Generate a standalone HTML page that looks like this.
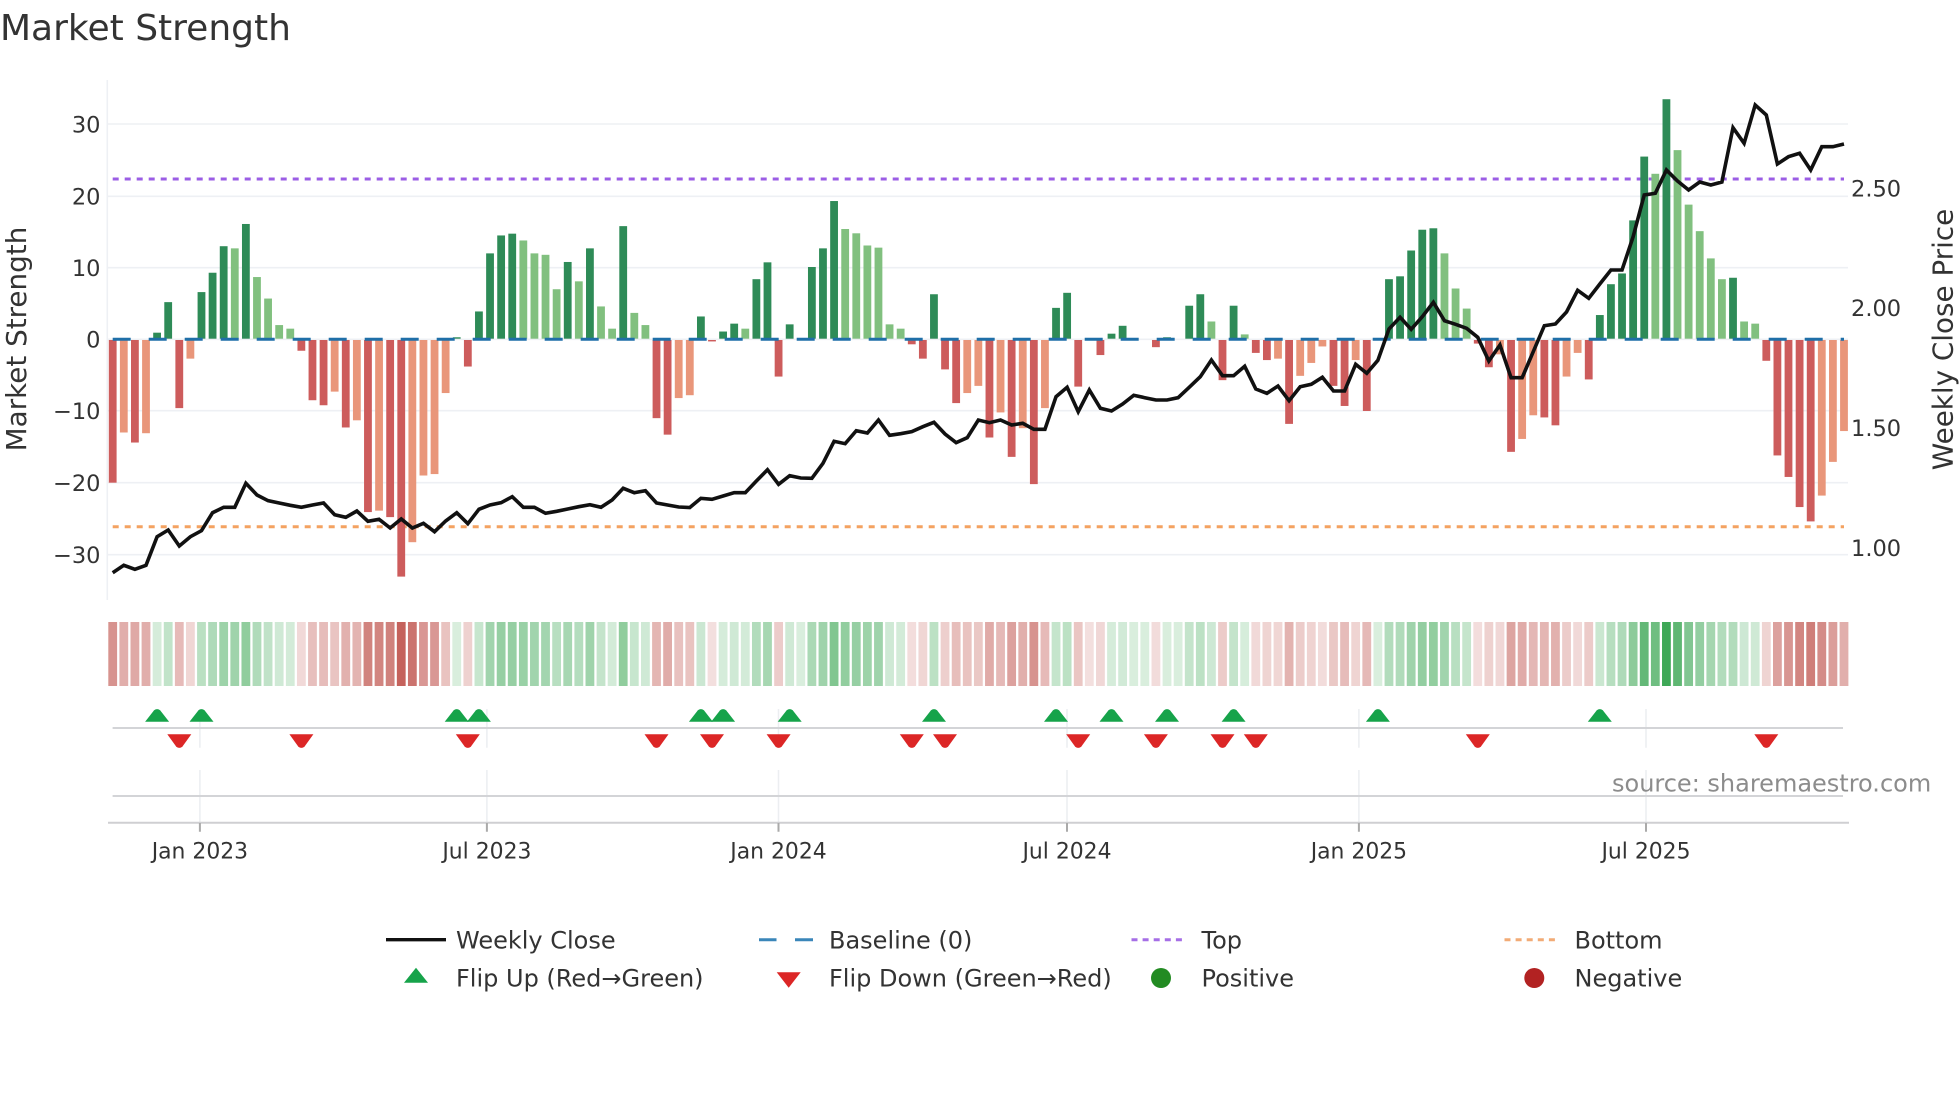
<!DOCTYPE html>
<html><head><meta charset="utf-8"><title>Market Strength</title>
<style>
html,body{margin:0;padding:0;background:#fff}
svg{display:block}
text{font-family:"DejaVu Sans","Liberation Sans",sans-serif;fill:#333}
.b rect{width:.703px}
.st rect{width:.793px;height:1px}
.t{font-size:22.5px}
.x{font-size:21.9px;text-anchor:middle}
.l{font-size:24px}
</style></head><body>
<svg width="1960" height="1102" viewBox="0 0 1960 1102" xmlns="http://www.w3.org/2000/svg">
<defs>
<path id="up" d="M-12 12.7L-3 1.2Q0-1 3 1.2L12 12.7Z" fill="#16a34a"/>
<path id="dn" d="M-12 0H12L3 12.4Q0 14.8-3 12.4Z" fill="#dc2626"/>
</defs>
<rect width="1960" height="1102" fill="#fff"/>
<text x="0" y="40" style="font-size:36px">Market Strength</text>

<!-- grid -->
<g stroke="#eef0f4" stroke-width="1.6" fill="none">
<path d="M107.3 80V600"/>
<path d="M107 124H1848M107 196.3H1848M107 267.7H1848M107 339.3H1848M107 410.7H1848M107 482.7H1848M107 554.7H1848"/>
</g>
<!-- thresholds -->
<path d="M112.7 179H1844" stroke="#9b5de5" stroke-width="3" stroke-dasharray="6 6" fill="none"/>
<path d="M112.7 526.7H1844" stroke="#f4a261" stroke-width="3" stroke-dasharray="6 6" fill="none"/>

<!-- positive bars -->
<g class="b" transform="translate(108.8,338.7) scale(11.098,-7.17)">
<g fill="#2e8b57">
<rect x="4" height=".84"/><rect x="5" height="5.1"/><rect x="8" height="6.5"/><rect x="9" height="9.2"/><rect x="10" height="12.9"/><rect x="12" height="16"/><rect x="31" height=".2"/><rect x="33" height="3.8"/><rect x="34" height="11.9"/><rect x="35" height="14.4"/><rect x="36" height="14.65"/><rect x="41" height="10.7"/><rect x="43" height="12.6"/><rect x="46" height="15.7"/><rect x="53" height="3.1"/><rect x="55" height="1"/><rect x="56" height="2.1"/><rect x="58" height="8.3"/><rect x="59" height="10.65"/><rect x="61" height="2"/><rect x="63" height="10"/><rect x="64" height="12.6"/><rect x="65" height="19.2"/><rect x="74" height="6.2"/><rect x="85" height="4.3"/><rect x="86" height="6.4"/><rect x="90" height=".7"/><rect x="91" height="1.8"/><rect x="95" height=".2"/><rect x="97" height="4.6"/><rect x="98" height="6.2"/><rect x="101" height="4.6"/><rect x="115" height="8.3"/><rect x="116" height="8.7"/><rect x="117" height="12.3"/><rect x="118" height="15.2"/><rect x="119" height="15.4"/><rect x="134" height="3.3"/><rect x="135" height="7.6"/><rect x="136" height="9.1"/><rect x="137" height="16.5"/><rect x="138" height="25.4"/><rect x="140" height="33.4"/><rect x="146" height="8.5"/>
</g>
<g fill="#81c07f">
<rect x="11" height="12.6"/><rect x="13" height="8.6"/><rect x="14" height="5.6"/><rect x="15" height="1.9"/><rect x="16" height="1.4"/><rect x="37" height="13.7"/><rect x="38" height="11.9"/><rect x="39" height="11.7"/><rect x="40" height="6.9"/><rect x="42" height="8"/><rect x="44" height="4.5"/><rect x="45" height="1.4"/><rect x="47" height="3.6"/><rect x="48" height="1.9"/><rect x="57" height="1.4"/><rect x="66" height="15.3"/><rect x="67" height="14.7"/><rect x="68" height="13"/><rect x="69" height="12.7"/><rect x="70" height="2"/><rect x="71" height="1.4"/><rect x="99" height="2.4"/><rect x="102" height=".6"/><rect x="120" height="11.9"/><rect x="121" height="7"/><rect x="122" height="4.2"/><rect x="139" height="23"/><rect x="141" height="26.3"/><rect x="142" height="18.7"/><rect x="143" height="15"/><rect x="144" height="11.2"/><rect x="145" height="8.3"/><rect x="147" height="2.4"/><rect x="148" height="2.1"/>
</g>
</g>
<!-- negative bars -->
<g class="b" transform="translate(108.8,340) scale(11.098,7.17)">
<g fill="#cd5c5c">
<rect x="0" height="19.9"/><rect x="2" height="14.3"/><rect x="6" height="9.5"/><rect x="17" height="1.5"/><rect x="18" height="8.4"/><rect x="19" height="9.1"/><rect x="21" height="12.2"/><rect x="23" height="24"/><rect x="25" height="24.7"/><rect x="26" height="33"/><rect x="32" height="3.7"/><rect x="49" height="10.9"/><rect x="50" height="13.2"/><rect x="54" height=".2"/><rect x="60" height="5.1"/><rect x="72" height=".6"/><rect x="73" height="2.6"/><rect x="75" height="4.1"/><rect x="76" height="8.8"/><rect x="79" height="13.6"/><rect x="81" height="16.3"/><rect x="83" height="20.1"/><rect x="87" height="6.5"/><rect x="89" height="2.1"/><rect x="94" height="1"/><rect x="100" height="5.6"/><rect x="103" height="1.8"/><rect x="104" height="2.8"/><rect x="106" height="11.7"/><rect x="110" height="6.4"/><rect x="111" height="9.2"/><rect x="113" height="9.9"/><rect x="123" height=".5"/><rect x="124" height="3.8"/><rect x="126" height="15.6"/><rect x="129" height="10.8"/><rect x="130" height="11.9"/><rect x="133" height="5.5"/><rect x="149" height="2.9"/><rect x="150" height="16.1"/><rect x="151" height="19.1"/><rect x="152" height="23.3"/><rect x="153" height="25.3"/>
</g>
<g fill="#e9967a">
<rect x="1" height="12.9"/><rect x="3" height="13"/><rect x="7" height="2.6"/><rect x="20" height="7.2"/><rect x="22" height="11.2"/><rect x="24" height="23.8"/><rect x="27" height="28.2"/><rect x="28" height="18.9"/><rect x="29" height="18.7"/><rect x="30" height="7.4"/><rect x="51" height="8.1"/><rect x="52" height="7.7"/><rect x="77" height="7.4"/><rect x="78" height="6.4"/><rect x="80" height="10.1"/><rect x="82" height="12.3"/><rect x="84" height="9.5"/><rect x="105" height="2.6"/><rect x="107" height="5"/><rect x="108" height="3.2"/><rect x="109" height=".9"/><rect x="112" height="2.8"/><rect x="125" height="2"/><rect x="127" height="13.8"/><rect x="128" height="10.5"/><rect x="131" height="5.1"/><rect x="132" height="1.8"/><rect x="154" height="21.7"/><rect x="155" height="17"/><rect x="156" height="12.7"/>
</g>
</g>
<!-- baseline -->
<path d="M112.7 339.3H1844" stroke="#1f6fa8" stroke-width="3" stroke-dasharray="18 18" fill="none"/>
<!-- weekly close -->
<g transform="translate(112.7,0) scale(11.098,1)">
<polyline vector-effect="non-scaling-stroke" fill="none" stroke="#111" stroke-width="3.6" stroke-linejoin="miter" points="0,572.7 1,565.3 2,569.3 3,565.3 4,536.7 5,530 6,546 7,536.7 8,530.7 9,512.7 10,507.3 11,507.3 12,483.3 13,495 14,500.7 15,503 16,505.3 17,507.3 18,505 19,503 20,514.7 21,517.3 22,511 23,521.3 24,519.3 25,528 26,519 27,528 28,523.3 29,531.7 30,521 31,512.7 32,523.7 33,509.3 34,505 35,502.7 36,496.7 37,507.3 38,507.3 39,513.3 40,511.3 41,509 42,506.7 43,504.7 44,507.3 45,500 46,488.3 47,492.7 48,490.7 49,503 50,505 51,507 52,507.5 53,498.3 54,499.3 55,496 56,492.7 57,492.7 58,481 59,469.7 60,484.3 61,475.7 62,478 63,478.3 64,463.3 65,441.3 66,443.7 67,430.7 68,433 69,420 70,435.3 71,433.7 72,431.7 73,426.7 74,422.3 75,434 76,442.7 77,437.7 78,420 79,422.7 80,420 81,425 82,423.3 83,429.3 84,429.3 85,396.7 86,387.3 87,411.7 88,390 89,408.3 90,411 91,404 92,395.3 93,397.7 94,400 95,400 96,397.7 97,387.3 98,376.7 99,360 100,375.7 101,375.7 102,366.3 103,389 104,393.3 105,386 106,400.7 107,386.7 108,384.3 109,377.3 110,391 111,391 112,364.3 113,373.3 114,360.3 115,329 116,317.3 117,329.3 118,316.7 119,302.3 120,320.7 121,324.3 122,328.3 123,337.3 124,361 125,345 126,377.7 127,377.7 128,351.7 129,325.7 130,324 131,312 132,290.3 133,298.3 134,284 135,270 136,270 137,236.7 138,195 139,193.3 140,170 141,181 142,190 143,182 144,185 145,182 146,127.7 147,143.3 148,105 149,115 150,164 151,156.7 152,153.3 153,170 154,146.7 155,146.7 156,144"/>
</g>

<!-- left ticks -->
<g class="t" text-anchor="end">
<text x="100.5" y="132.7">30</text><text x="100.5" y="204.6">20</text><text x="100.5" y="276">10</text><text x="100.5" y="347.6">0</text><text x="100.5" y="419">−10</text><text x="100.5" y="491">−20</text><text x="100.5" y="563">−30</text>
</g>
<!-- right ticks -->
<g class="t">
<text x="1851" y="196.3">2.50</text><text x="1851" y="316.2">2.00</text><text x="1851" y="436">1.50</text><text x="1851" y="556">1.00</text>
</g>
<text transform="translate(26,339) rotate(-90)" text-anchor="middle" style="font-size:27.8px">Market Strength</text>
<text transform="translate(1952.5,339.5) rotate(-90)" text-anchor="middle" style="font-size:27.8px">Weekly Close Price</text>

<!-- heat strip -->
<g class="st" transform="translate(108.3,622) scale(11.098,64)">
<g fill="#c4605a">
<rect x="0" opacity=".68"/><rect x="1" opacity=".51"/><rect x="2" opacity=".54"/><rect x="3" opacity=".51"/><rect x="6" opacity=".43"/><rect x="7" opacity=".26"/><rect x="17" opacity=".24"/><rect x="18" opacity=".4"/><rect x="19" opacity=".42"/><rect x="20" opacity=".37"/><rect x="21" opacity=".49"/><rect x="22" opacity=".47"/><rect x="23" opacity=".78"/><rect x="24" opacity=".77"/><rect x="25" opacity=".79"/><rect x="26" opacity=".99"/><rect x="27" opacity=".88"/><rect x="28" opacity=".65"/><rect x="29" opacity=".65"/><rect x="30" opacity=".38"/><rect x="32" opacity=".29"/><rect x="49" opacity=".46"/><rect x="50" opacity=".52"/><rect x="51" opacity=".39"/><rect x="52" opacity=".38"/><rect x="54" opacity=".2"/><rect x="60" opacity=".32"/><rect x="72" opacity=".21"/><rect x="73" opacity=".26"/><rect x="75" opacity=".3"/><rect x="76" opacity=".41"/><rect x="77" opacity=".38"/><rect x="78" opacity=".35"/><rect x="79" opacity=".53"/><rect x="80" opacity=".44"/><rect x="81" opacity=".59"/><rect x="82" opacity=".5"/><rect x="83" opacity=".68"/><rect x="84" opacity=".43"/><rect x="87" opacity=".36"/><rect x="88" opacity=".2"/><rect x="89" opacity=".25"/><rect x="94" opacity=".22"/><rect x="100" opacity=".33"/><rect x="103" opacity=".24"/><rect x="104" opacity=".27"/><rect x="105" opacity=".26"/><rect x="106" opacity=".48"/><rect x="107" opacity=".32"/><rect x="108" opacity=".28"/><rect x="109" opacity=".22"/><rect x="110" opacity=".35"/><rect x="111" opacity=".42"/><rect x="112" opacity=".27"/><rect x="113" opacity=".44"/><rect x="123" opacity=".21"/><rect x="124" opacity=".29"/><rect x="125" opacity=".25"/><rect x="126" opacity=".57"/><rect x="127" opacity=".53"/><rect x="128" opacity=".45"/><rect x="129" opacity=".46"/><rect x="130" opacity=".49"/><rect x="131" opacity=".32"/><rect x="132" opacity=".24"/><rect x="133" opacity=".33"/><rect x="149" opacity=".27"/><rect x="150" opacity=".59"/><rect x="151" opacity=".66"/><rect x="152" opacity=".76"/><rect x="153" opacity=".81"/><rect x="154" opacity=".72"/><rect x="155" opacity=".61"/><rect x="156" opacity=".5"/>
</g>
<g fill="#3fa857">
<rect x="4" opacity=".22"/><rect x="5" opacity=".32"/><rect x="8" opacity=".36"/><rect x="9" opacity=".42"/><rect x="10" opacity=".51"/><rect x="11" opacity=".5"/><rect x="12" opacity=".58"/><rect x="13" opacity=".41"/><rect x="14" opacity=".33"/><rect x="15" opacity=".25"/><rect x="16" opacity=".23"/><rect x="31" opacity=".2"/><rect x="33" opacity=".29"/><rect x="34" opacity=".49"/><rect x="35" opacity=".55"/><rect x="36" opacity=".55"/><rect x="37" opacity=".53"/><rect x="38" opacity=".49"/><rect x="39" opacity=".48"/><rect x="40" opacity=".37"/><rect x="41" opacity=".46"/><rect x="42" opacity=".39"/><rect x="43" opacity=".5"/><rect x="44" opacity=".31"/><rect x="45" opacity=".23"/><rect x="46" opacity=".58"/><rect x="47" opacity=".29"/><rect x="48" opacity=".25"/><rect x="53" opacity=".27"/><rect x="55" opacity=".22"/><rect x="56" opacity=".25"/><rect x="57" opacity=".23"/><rect x="58" opacity=".4"/><rect x="59" opacity=".46"/><rect x="61" opacity=".25"/><rect x="62" opacity=".2"/><rect x="63" opacity=".44"/><rect x="64" opacity=".5"/><rect x="65" opacity=".66"/><rect x="66" opacity=".57"/><rect x="67" opacity=".55"/><rect x="68" opacity=".51"/><rect x="69" opacity=".5"/><rect x="70" opacity=".25"/><rect x="71" opacity=".23"/><rect x="74" opacity=".35"/><rect x="85" opacity=".3"/><rect x="86" opacity=".35"/><rect x="90" opacity=".22"/><rect x="91" opacity=".24"/><rect x="92" opacity=".2"/><rect x="93" opacity=".2"/><rect x="95" opacity=".2"/><rect x="96" opacity=".2"/><rect x="97" opacity=".31"/><rect x="98" opacity=".35"/><rect x="99" opacity=".26"/><rect x="101" opacity=".31"/><rect x="102" opacity=".21"/><rect x="114" opacity=".2"/><rect x="115" opacity=".4"/><rect x="116" opacity=".41"/><rect x="117" opacity=".5"/><rect x="118" opacity=".56"/><rect x="119" opacity=".57"/><rect x="120" opacity=".49"/><rect x="121" opacity=".37"/><rect x="122" opacity=".3"/><rect x="134" opacity=".28"/><rect x="135" opacity=".38"/><rect x="136" opacity=".42"/><rect x="137" opacity=".6"/><rect x="138" opacity=".81"/><rect x="139" opacity=".75"/><rect x="140" opacity="1"/><rect x="141" opacity=".83"/><rect x="142" opacity=".65"/><rect x="143" opacity=".56"/><rect x="144" opacity=".47"/><rect x="145" opacity=".4"/><rect x="146" opacity=".4"/><rect x="147" opacity=".26"/><rect x="148" opacity=".25"/>
</g>
</g>

<!-- lower panels -->
<path d="M199.9 709V747.7M486.9 709V747.7M778.5 709V747.7M1067 709V747.7M1358.9 709V747.7M1646 709V747.7M199.9 770V822.7M486.9 770V822.7M778.5 770V822.7M1067 770V822.7M1358.9 770V822.7M1646 770V822.7" stroke="#eceef1" stroke-width="1.5" fill="none"/>
<path d="M112.6 728H1843M112.6 796H1843" stroke="#d3d4d7" stroke-width="2" fill="none"/>
<path d="M108 822.7H1849" stroke="#cfcfd2" stroke-width="2" fill="none"/>
<path d="M199.9 823V831.7M486.9 823V831.7M778.5 823V831.7M1067 823V831.7M1358.9 823V831.7M1646 823V831.7" stroke="#aaa" stroke-width="2" fill="none"/>

<g transform="translate(0,709)">
<use href="#up" x="157.1"/><use href="#up" x="201.5"/><use href="#up" x="456.7"/><use href="#up" x="478.9"/><use href="#up" x="700.9"/><use href="#up" x="723.1"/><use href="#up" x="789.7"/><use href="#up" x="934"/><use href="#up" x="1056"/><use href="#up" x="1111.5"/><use href="#up" x="1167"/><use href="#up" x="1233.6"/><use href="#up" x="1377.9"/><use href="#up" x="1599.8"/>
</g>
<g transform="translate(0,734.3)">
<use href="#dn" x="179.3"/><use href="#dn" x="301.4"/><use href="#dn" x="467.8"/><use href="#dn" x="656.5"/><use href="#dn" x="712"/><use href="#dn" x="778.6"/><use href="#dn" x="911.8"/><use href="#dn" x="945"/><use href="#dn" x="1078.2"/><use href="#dn" x="1155.9"/><use href="#dn" x="1222.5"/><use href="#dn" x="1255.8"/><use href="#dn" x="1477.8"/><use href="#dn" x="1766.3"/>
</g>

<g class="x">
<text x="199.9" y="858.3">Jan 2023</text><text x="486.9" y="858.3">Jul 2023</text><text x="778.5" y="858.3">Jan 2024</text><text x="1067" y="858.3">Jul 2024</text><text x="1358.9" y="858.3">Jan 2025</text><text x="1646" y="858.3">Jul 2025</text>
</g>
<text x="1612" y="791.7" style="font-size:24px;fill:#8c8c8c">source: sharemaestro.com</text>

<!-- legend -->
<path d="M386 939.7H446" stroke="#111" stroke-width="3.4" fill="none"/>
<path d="M759 939.7H776.5M795 939.7H813" stroke="#3a86b9" stroke-width="3" fill="none"/>
<path d="M1131.5 939.7H1186" stroke="#a56ee6" stroke-width="3" stroke-dasharray="6 5.1" fill="none"/>
<path d="M1504.5 939.7H1559" stroke="#f2ab76" stroke-width="3" stroke-dasharray="6 5.1" fill="none"/>
<path d="M416 967.7L428 982.7H404Z" fill="#16a34a"/>
<path d="M788.7 987.7L776.7 972.3H800.7Z" fill="#dc2626"/>
<circle cx="1161" cy="978" r="10" fill="#228b22"/>
<circle cx="1534.3" cy="978" r="10" fill="#b22222"/>
<g class="l">
<text x="456" y="948.3">Weekly Close</text>
<text x="829" y="948.3">Baseline (0)</text>
<text x="1201.5" y="948.3">Top</text>
<text x="1574.5" y="948.3">Bottom</text>
<text x="456" y="986.7">Flip Up (Red→Green)</text>
<text x="829" y="986.7">Flip Down (Green→Red)</text>
<text x="1201.5" y="986.7">Positive</text>
<text x="1574.5" y="986.7">Negative</text>
</g>
</svg>
</body></html>
